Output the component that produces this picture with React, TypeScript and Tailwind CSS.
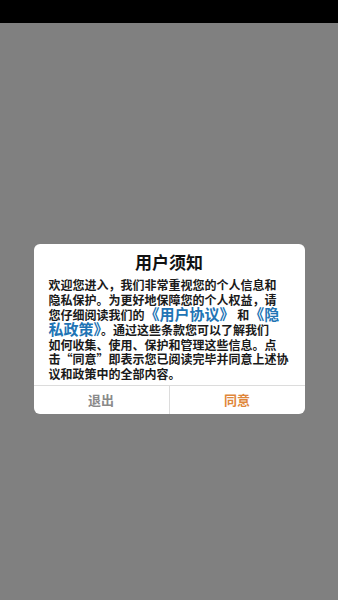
import React from "react";

export default function App() {
  const font = { fontFamily: '"Noto Sans CJK SC", "Noto Sans", sans-serif' };
  return (
    <div className="w-[338px] h-[600px] flex flex-col bg-[#808080]" style={font}>
      <div className="h-[23px] bg-black shrink-0" />
      <div className="flex justify-center pt-[221px]">
        <div className="w-[271px] bg-white rounded-[6px] flex flex-col overflow-hidden">
          <div className="pt-[8px] h-[28px] leading-[20px] text-center text-[17px] font-bold text-[#111]">
            用户须知
          </div>
          <div className="pt-[4.5px] pb-[4px] pl-[15px] text-[12px] font-bold text-[#1a1a1a] whitespace-nowrap">
            <div className="h-[15px] leading-[15px]">欢迎您进入，我们非常重视您的个人信息和</div>
            <div className="h-[15px] leading-[15px]">隐私保护。为更好地保障您的个人权益，请</div>
            <div className="h-[14.5px] leading-[14.5px]">
              您仔细阅读我们的<span className="text-[15px] text-[#2174b5]">《用户协议》</span> 和<span className="text-[15px] text-[#2174b5]">《隐</span>
            </div>
            <div className="h-[16px] leading-[16px]">
              <span className="text-[15px] text-[#2174b5]">私政策》</span>。通过这些条款您可以了解我们
            </div>
            <div className="h-[15px] leading-[15px]">如何收集、使用、保护和管理这些信息。点</div>
            <div className="h-[14px] leading-[14px]">击“同意”即表示您已阅读完毕并同意上述协</div>
            <div className="h-[15px] leading-[15px]">议和政策中的全部内容。</div>
          </div>
          <div className="h-px bg-[#dcdcdc]" />
          <div className="flex h-[28px]">
            <div className="flex-1 flex items-center justify-center text-[13px] font-bold text-[#8a8a8a]">退出</div>
            <div className="w-px bg-[#dcdcdc]" />
            <div className="flex-1 flex items-center justify-center text-[13px] font-bold text-[#e0873a]">同意</div>
          </div>
        </div>
      </div>
    </div>
  );
}
